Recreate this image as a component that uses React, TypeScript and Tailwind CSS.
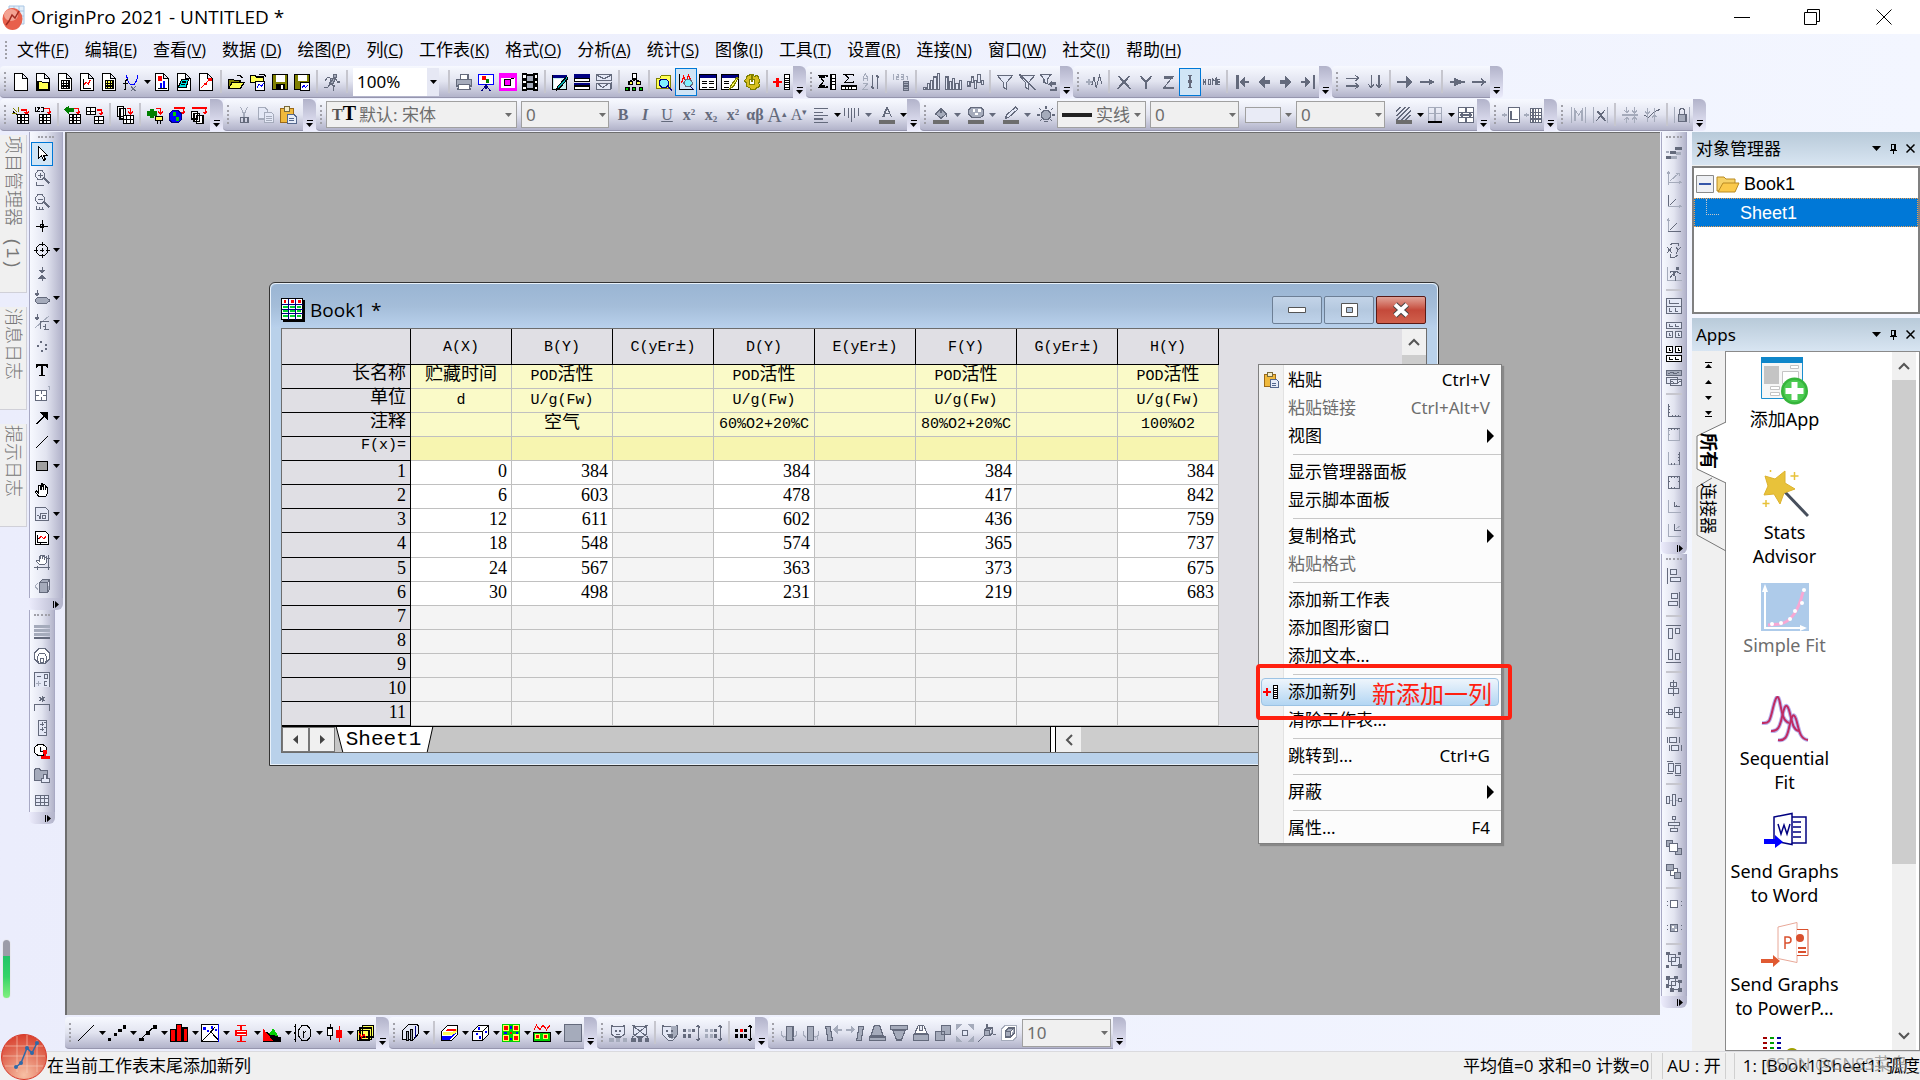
import React from 'react';

type Shape = [stroke: string, fill: string, d: string];

const K = '#000000';
const W = '#ffffff';
const G = '#646a7c';
const L = '#a5abbb';
const R = '#ff0000';
const B = '#0000ff';
const Y = '#ffff54';
const N = '#000080';
const O = '#808000';

const PAGE = 'M2.5 .5h7l4 4v11h-11z M9.5 .5v4h4';
const GRID = 'M4.5 6.5h7v7h-7z M7 6.5v7 M9.5 6.5v7 M4.5 9h7 M4.5 11.5h7';
const LOWGRID = 'M4.5 7.5h10v8h-10z M8 7.5v8 M11 7.5v8 M4.5 10h10 M4.5 12.5h10';
const AXES = 'M2.5 1v13.5h12';

const ICONS: Record<string, Shape[]> = {
  'new': [[K, W, PAGE]],
  'new-folder': [[K, W, PAGE], [K, Y, 'M3.5 7.5h3l1 1h5v6h-9z']],
  'new-book': [[K, W, PAGE], [K, '', GRID]],
  'new-graph': [[K, W, PAGE], [R, '', 'M5 11l2-3 2 2 2-4'], [K, '', 'M4.5 5v8.5h7']],
  'new-matrix': [[K, W, PAGE], [K, Y, GRID]],
  'new-function': [[B, '', 'M4 1.5q1 9 5 9t5-9'], [K, '', 'M5 6h-1l-1 2v7h-1 M1 9.5h4'], [G, '', 'M8 12l4 4 M12 12l-4 4']],
  'new-layout': [[K, W, PAGE], ['', R, 'M4 3h4v4h-4z'], ['', B, 'M6 9h2v4h-2z M9 7h2v6h-2z'], [K, '', 'M4 14h8']],
  'new-notes': [[K, W, PAGE], [K, '#00e0e0', 'M6 5.5h6l-2 7h-7z'], [K, '', 'M6 8h4 M5 10h4']],
  'new-excel': [[K, W, PAGE], [R, '', 'M4 13l8-8'], ['', R, 'M6 9h3v2h-3z M10 4h3v3h-3z']],
  'open': [[K, O, 'M1.5 13.5v-8h4l1 1h5v2h3.5l-3 5z'], [K, Y, 'M1.5 13.5l3-5h11l-4 5z'], [K, '', 'M9 2.5h3l2 2']],
  'open-template': [[K, Y, 'M1.5 8.5v-6h4l1 1h6v5z'], [K, W, 'M5.5 7.5h8v8h-8z'], [B, '', 'M7 13l2-3 2 2 2-3'], [K, '', 'M9 1h4l2 2']],
  'save': [[K, O, 'M1.5 1.5h13v13h-13z'], ['', W, 'M4 2h8v6h-8z'], ['', K, 'M4 10h8v4h-8z'], ['', W, 'M9 11h2v3h-2z']],
  'save-template': [[K, O, 'M1.5 1.5h13v13h-13z'], ['', W, 'M4 2h8v5h-8z'], [K, W, 'M6.5 8.5h8v7h-8z'], [B, '', 'M8 13l2-2 1 2 2-2']],
  'run': [[G, L, 'M9 1h3v3h-3z M7 5h4l-2 4h-3z'], [G, '', 'M9 5l-5-1-2 3 M11 5l2 3h2 M9 5l-3 5 4 1-1 5 M6 10l-2 3h-3']],
  'print': [[G, W, 'M4.5 5v-4h7v4'], [G, L, 'M1.5 5.5h13v6h-13z'], [G, W, 'M3.5 10.5h9l1 4h-11z']],
  'slides': [[B, W, 'M1.5 1.5h13v9h-13z'], ['', R, 'M4 3h4v3h-4z'], ['', '#008000', 'M8 5h3v4h-3z'], [N, '', 'M8 10v4 M8 11l-4 5 M8 11l4 5']],
  'camera': [['', '#ff00ff', 'M0 0h16v16h-16z'], ['', W, 'M2 4h12v9h-12z'], [K, '#ff00ff', 'M5 6h5v5h-5z'], [K, '', 'M11 5h2']],
  'film': [['', K, 'M1 0h4v16h-4z M11 0h4v16h-4z M5 1h6v2h-6z M5 7h6v2h-6z M5 13h6v2h-6z'], ['', W, 'M2 2h2v2h-2z M2 7h2v2h-2z M2 12h2v2h-2z M12 2h2v2h-2z M12 7h2v2h-2z M12 12h2v2h-2z'], ['', L, 'M5 3h6v4h-6z M5 9h6v4h-6z']],
  'script': [[K, '#c8f0f0', 'M1.5 2.5h12v12h-12z'], ['', N, 'M2 2h12v2h-12z'], ['', W, 'M3 5h6v8h-6z'], [K, '#00b0b0', 'M14 3l-8 9-1 3 3-2 7-8z']],
  'results': [['', N, 'M1 1h14v3h-14z M1 9h14v3h-14z'], [K, W, 'M1.5 4.5h13v3h-13z M1.5 11.5h13v3h-13z']],
  'messages': [[G, '#e4e8f6', 'M1.5 1.5h13v5h-13z M1.5 9.5h12v5h-12z'], [G, '', 'M2 2l6 3 6-3 M3 10l4 3 4-3 M14.5 8v6']],
  'explorer': [[K, W, 'M6.5 .5h4v4h-4z'], [K, Y, 'M3.5 7.5h3v3h-3z M10.5 7.5h3v3h-3z'], [K, '#00d000', 'M.5 12.5h3v3h-3z M6.5 12.5h3v3h-3z M12.5 12.5h3v3h-3z'], [K, '', 'M8 5v2 M5 7l3-2 4 2']],
  'preview': [[O, Y, 'M1.5 4.5h3l1-2h8v11h-12z'], [N, '#7ff0ff', 'M5 5.5h5l2 2v3l-2 2h-4l-2-2v-3z'], [N, '', 'M11 11l4 4 M11 12l4 4']],
  'zoom-data': [[K, '', AXES], [R, '', 'M4 9l2-6 2 5 2-6 2 4'], [G, '#7ff0ff', 'M8 6h4l2 3-2 3h-4l-2-3z'], [N, '', 'M12 12l3 3']],
  'dialog-table': [[K, W, 'M.5 1.5h15v13h-15z'], ['', N, 'M1 2h14v2h-14z'], [K, '', 'M3 7.5h4 M9 7.5h4 M3 9.5h4 M9 9.5h4 M3 12.5h4 M9 12.5h4']],
  'dialog-edit': [[K, W, 'M.5 1.5h15v13h-15z'], ['', N, 'M1 2h14v2h-14z'], [K, '', 'M3 7.5h4 M3 9.5h4 M3 12.5h4'], [O, Y, 'M14 4l-5 7-1 3 3-2 4-7z']],
  'gear': [[O, '#d8c020', 'M6 1h3l1 2 3-1 1 3 1 2-1 2 1 3-3 1-1 2h-4l-1-2-3-1v-3l-2-2 2-2v-2l3-1z'], [O, W, 'M6 6h4v4h-4z'], [O, '', 'M8 2v6']],
  'add-column': [['', R, 'M0 7h8v2h-8z M3 4h2v8h-2z'], [K, W, 'M10.5 1.5h4v13h-4z'], [K, '', 'M10 4.5h5 M10 6.5h5 M10 8.5h5 M10 10.5h5 M10 12.5h5']],
  'stats-column': [[K, '', 'M8 3.5v-1h-7l4 5-4 5h7v-1 M1 3.5h5 M1 11.5h5'], [K, W, 'M11.5 1.5h4v13h-4z'], [K, '', 'M11 4.5h5 M11 7.5h5 M11 10.5h5']],
  'stats-row': [[K, '', 'M12 2.5v-1h-8l4 3-4 4h8v-1'], [K, W, 'M1.5 11.5h13v3h-13z'], [K, '', 'M4.5 11v4 M7.5 11v4 M10.5 11v4']],
  'sort': [[L, '', 'M1.5 7v-4l1.5-2 1.5 2v4 M1.5 5h3 M1 9.5h4l-4 5h4'], [G, '', 'M9.5 2v12 M8 12l1.5 2 1.5-2 M13.5 2v12 M12 4l1.5-2 1.5 2']],
  'set-values': [[L, '', 'M1.5 1v5 M4 1.5h2v2h-2v2h2 M8 1.5h2v4h-2 M8 3.5h2 M12 3h2v3'], [G, L, 'M10.5 7.5h4v8h-4z'], [G, '', 'M10 9.5h5 M10 11.5h5 M10 13.5h5']],
  'bars-up': [[G, '#e4e8f6', 'M1.5 12.5h2v2h-2z M4.5 9.5h2v5h-2z M7.5 6.5h2v8h-2z M10.5 3.5h2v11h-2z M13.5 .5h2v14h-2z']],
  'bars': [[G, '#e4e8f6', 'M1.5 3.5h2v11h-2z M4.5 7.5h2v7h-2z M7.5 4.5h2v10h-2z M10.5 9.5h2v5h-2z M13.5 6.5h2v8h-2z']],
  'bars-mid': [[G, '#e4e8f6', 'M1.5 7.5h2v4h-2z M4.5 3.5h2v5h-2z M7.5 6.5h2v7h-2z M10.5 1.5h2v7h-2z M13.5 6.5h2v4h-2z']],
  'filter': [[G, '#e4e8f6', 'M1.5 2.5h13l-5 6v6l-3-2v-4z']],
  'filter-off': [[G, '#e4e8f6', 'M1.5 2.5h13l-5 6v6l-3-2v-4z'], [G, '', 'M1 1l14 14 M2 1l14 14']],
  'filter-again': [[G, '#e4e8f6', 'M.5 1.5h9l-3 4v4l-3-1v-3z'], ['', G, 'M7 10l4-4v2h3v3h-3v2z M15 12v4h-6v-2h4v-2z']],
  'add-peak': [[L, '', 'M1 8h5 M3.5 5.5v5'], [G, '', 'M6 11l2-7 2 9 3-11 2 8']],
  'x': [[G, '', 'M3 3l10 11 M4 3l10 11 M13 3l-10 11 M12 3l-10 11']],
  'y': [[G, '', 'M3 3l5 6v5 M13 3l-5 6 M4 3l4.5 5v6 M12 3l-4 5']],
  'z': [[G, '', 'M4 3.5h8l-8 10h9 M4 4.5h8 M4 12.5h9']],
  'marker': [[G, '', 'M6 2.5h4 M8 2v11 M6 12.5h4'], ['', G, 'M6.5 6h3v3h-3z']],
  'home': [[G, '', 'M.5 5v6 M2.5 5v6 M.5 8h2 M4.5 5.5h2v5h-2z M8.5 11v-6l1.5 2 1.5-2v6 M15 5.5h-2v5h2 M13 8h2']],
  'first': [['', G, 'M3 2h2v12h-2z M6 8l5-5v4h3v2h-3v4z']],
  'prev': [['', G, 'M3 8l6-6v4h4v4h-4v4z']],
  'next': [['', G, 'M13 8l-6-6v4h-4v4h4v4z']],
  'last': [['', G, 'M12 2h2v12h-2z M10 8l-5-5v4h-3v2h3v4z']],
  'two-right': [[G, '', 'M2 4.5h11 M10 2l3 2.5-3 2.5 M2 11.5h11 M10 9l3 2.5-3 2.5']],
  'two-down': [[G, '', 'M4.5 2v11 M2 10l2.5 3 2.5-3 M11.5 2v11 M9 10l2.5 3 2.5-3']],
  'arrow-big': [[G, G, 'M1 8h8v-5l5 5-5 5v-5']],
  'arrow-small': [[G, G, 'M2 8h8v-2l4 2-4 2v-2']],
  'arrow-solid': [[G, G, 'M2 8h4v-3l7 3-7 3v-3 M13 8h2']],
  'arrow-thin': [[G, '', 'M2 8h12 M10 5l3 3-3 3']],

  'wizard': [[K, Y, 'M1 5l8 6'], [O, '', 'M1 2l3 3 M6 1v4 M0 7h4'], [R, '', 'M8 3.5h5v4 M11 5l2 2.5 2-2.5'], [K, W, LOWGRID]],
  'import-ascii': [[K, '', 'M1.5 1v4 M3 1.5h2l-2 3h2 M6.5 1.5h2v3h-2'], [R, '', 'M9 2.5h4.5v4 M12 5l1.5 2 1.5-2'], [K, W, LOWGRID]],
  'reimport': [['#008000', '#008000', 'M1 3l3-2.5v2h4v2h-4v2z'], [R, '', 'M12.5 2v5 M11 5l1.5 2 1.5-2 M9 2.5h3'], [K, W, LOWGRID]],
  'import-sheet': [[K, W, 'M.5 1.5h8v6h-8z M4 1.5v6 M.5 4.5h8'], [R, '', 'M10 3.5h3.5v4 M12 6l1.5 2 1.5-2'], [K, W, 'M7.5 9.5h8v6h-8z M11 9.5v6 M7.5 12.5h8']],
  'import-multi': [[K, W, 'M1.5 .5h5v9h-5z M3.5 2.5h5v9h-5z'], [R, '', 'M10 2.5h3v4 M11 5l2 2 2-2'], [K, W, 'M6.5 8.5h9v7h-9z M9.5 8.5v7 M12.5 8.5v7 M6.5 12h9']],
  'connect-file': [['#008000', '#008000', 'M1 5h8v3h-8z M4 3h3v7h-3z'], [R, '', 'M9 2.5h4v4 M11 5l2 2 2-2'], [K, Y, 'M8.5 9.5h6v3h-6z M10 13v3 M13 13v3']],
  'connect-web': [[N, B, 'M4 4h5l3 3v5l-3 3h-5l-3-3v-5z'], ['', '#00d000', 'M4 5h3v4h-3z M7 10h3v3h-3z'], ['', R, 'M5 1h10v2h-10z'], [R, '', 'M13.5 2v5 M12 5l1.5 2 1.5-2']],
  'connect-db': [[K, W, 'M1.5 4.5h5v7h-5z M3.5 6.5h5v7h-5z M5.5 8.5h6v7h-6z'], ['', R, 'M2 1h13v2h-13z'], [R, '', 'M13.5 2v5 M12 5l1.5 2 1.5-2']],
  'cut': [[L, '', 'M5 1l4 9 M11 1l-4 9'], [G, '', 'M4.5 10.5h3v4h-3z M8.5 10.5h3v4h-3z']],
  'copy': [[L, '#e4e8f6', 'M1.5 1.5h6l2 2v8h-8z'], [L, '#e4e8f6', 'M6.5 5.5h6l2 2v7h-8z'], [L, '', 'M8 9h5 M8 11h5 M8 13h5']],
  'paste': [['#9c6a18', '#f0b93c', 'M1.5 2.5h11v12h-11z'], ['#77693c', '#f4ecc8', 'M4.5 .5h5v4h-5z'], ['#54678c', '#e6ecf8', 'M7.5 7.5h6l2 2v6h-8z'], ['#54678c', '', 'M9 11h4 M9 13h4']],
  'align-left': [[G, '', 'M2 2.5h12 M2 5.5h8 M2 8.5h12 M2 11.5h8 M2 14.5h12']],
  'columns': [[G, '', 'M1.5 2v7 M4.5 2v9 M7.5 2v12 M10.5 2v9 M13.5 2v7']],
  'font-color': [[G, '', 'M4 10l4-9 4 9 M5.5 7h5 M5 10l3.5-9'], ['', '#6d6d6d', 'M1 12h14v4h-14z']],
  'fill-color': [[G, L, 'M3 7l5-5 5 5-5 4z'], [G, '', 'M8 2v4 M13 7v3'], ['', '#6d6d6d', 'M1 12h14v4h-14z']],
  'pattern-color': [[G, L, 'M4 1h8l3 3v4l-3 2h-8l-3-3v-3z'], ['', W, 'M5 3h2v2h-2z M10 3h2v2h-2z M7 6h3v2h-3z'], ['', '#6d6d6d', 'M1 12h14v4h-14z']],
  'line-color': [[G, '#e4e8f6', 'M12 1l2 2-8 7-3 1 1-3z'], ['', '#6d6d6d', 'M1 12h14v4h-14z']],
  'light': [[G, L, 'M6 4h4l2 2v4l-2 2h-4l-2-2v-4z'], [G, '', 'M8 0v3 M2 2l2 2 M14 2l-2 2 M0 8h3 M13 8h3 M3 13l2-2 M13 13l-2-2 M6.5 14h3']],
  'hatch': [[G, '', 'M1 5l4-4 M1 9l8-8 M1 13l12-12 M5 13l9-9 M9 13l5-5'], ['', '#6d6d6d', 'M1 12h14v4h-14z']],
  'borders': [[L, '', 'M2.5 1v12 M8 1v12 M13.5 1v12 M2 1.5h12 M2 7h12'], ['', K, 'M2 13h12v2h-12z']],
  'merge': [[G, W, 'M1.5 1.5h13v13h-13z'], [G, '', 'M1 5.5h14 M1 10.5h14 M8 1v4 M8 11v4 M3 8h10 M5 6l-2 2 2 2 M11 6l2 2-2 2']],
  'add-layer': [[L, '', 'M0 8h4 M2 6v4'], [G, W, 'M5.5 1.5h10v13h-10z'], [G, '', 'M8 4v8h6']],
  'add-table': [[L, '', 'M0 8h4 M2 6v4'], [G, W, 'M5.5 2.5h10v12h-10z M8 2v12 M10.5 2v12 M13 2v12 M5 5.5h10 M5 8.5h10 M5 11.5h10']],
  'mask': [[L, '', 'M2.5 1v14 M14.5 1v14 M5 13v-10l3.5 5 3.5-5v10 M6 13v-9 M11 13v-9']],
  'unmask': [[L, '', 'M2.5 1v14 M14.5 1v14'], [G, '', 'M5 4l7 9 M6 4l7 9 M12 4l-7 9']],
  'spread': [[L, '', 'M5 1v5 M3 4l2 2 2-2 M5 15v-5 M3 12l2-2 2 2 M12 1v5 M10 4l2 2 2-2 M12 15v-5 M10 12l2-2 2 2 M1 8h14']],
  'merge-rows': [[G, '', 'M1 8l4 2 5-5 5-2'], [L, '', 'M4 2v12 M10 2v12 M2 5l2 2 2-2 M8 10l2-2 2 2']],
  'lock': [[L, '', 'M1.5 1v14 M14.5 1v14'], [G, '', 'M5.5 8v-4l1.5-1.5h2l1.5 1.5v4'], [G, L, 'M4.5 7.5h7v6h-7z']],

  'pointer': [[K, W, 'M4.5 .5v12l3-3 2 5 2-1-2-4h4z']],
  'zoom-in': [[G, '', 'M4 .5h4l2.5 3v3l-2.5 3h-4l-2.5-3v-3z M6 2.5v5 M3.5 5h5 M2 12v3h8'], ['', G, 'M9 8l2-1 5 6-2 1z']],
  'zoom-out': [[G, '', 'M4 .5h4l2.5 3v3l-2.5 3h-4l-2.5-3v-3z M3.5 5h5 M2 12v3h8 M5 13v2 M8 13v2'], ['', G, 'M9 8l2-1 5 6-2 1z']],
  'reader': [[K, '', 'M8 2v12 M2 8h12 M6.5 6.5h3v3h-3z']],
  'data-reader': [[K, '', 'M8 0v4 M8 12v4 M0 8h4 M12 8h4 M5.5 2.5h5l3 3v5l-3 3h-5l-3-3v-5z M8 6v4 M6 8h4']],
  'squeeze': [[G, G, 'M8 1v4 M5.5 4h5l-2.5 3z M8 15v-4 M5.5 12h5l-2.5-3z']],
  'mask-tool': [[G, G, 'M3 0v4 M1 3h4l-2 3z'], [G, L, 'M4 7.5h8l3 2v2l-3 2h-8l-3-2v-2z']],
  'draw-tool': [[G, G, 'M3 0v4 M1 3h4l-2 3z'], [L, '', 'M1 14l14-12'], [G, '', 'M6.5 15v-8h8 M9 12h3 M10 15h5 M11 10v5']],
  'dots': [['', G, 'M6 3h2v2h-2z M11 6h2v2h-2z M3 7h2v2h-2z M11 10h2v2h-2z M7 12h2v2h-2z']],
  'text': [['', K, 'M2 2h12v4h-1l-1-2h-3v9h2v1h-6v-1h2v-9h-3l-1 2h-1z']],
  'insert-object': [[G, W, 'M1.5 4.5h11v10h-11z'], [G, '', 'M7 4v4 M7 11v4 M1 9.5h4 M9 9.5h4'], [L, '', 'M13.5 0h2v4']],
  'arrow-tool': [[K, K, 'M7 2.5h6.500v6.500z'], [K, '', 'M2 14l10-10 M3 14l9-9']],
  'line-tool': [[K, '', 'M2 14l12-12']],
  'rect-tool': [[K, '#a0a0a0', 'M2.5 3.5h11v9h-11z']],
  'hand': [[K, W, 'M5 15l-3.5-5 1-1 2 2v-7l1.5-1 1 5v-6l1.5-.5 1 6v-5h1.5l.5 5 1-3 1 1v6l-2 3z']],
  'formula': [[G, '#e4e8f6', 'M1.5 1.5h10l3 3v10h-13z'], [G, '', 'M3 9h1.5l1.5 4 1-6h6 M8.5 9.5h3v3h-3z']],
  'graph-page': [[K, W, 'M1.5 1.5h10l3 3v10h-13z'], [R, '', 'M5 9l2-3 3 3 2-3'], [K, '', 'M3.5 5v7.5h9 M3 8h2 M6 12v2']],
  'pan-axis': [[G, W, 'M5 10l-3-3 1-1 2 1v-5h1.5v3l.5-4h1.5v4l1-4h1v4l1.5-2v6l-2 2z'], [G, '', 'M0 13.5h16 M14.5 1v15 M3 12v4 M13 4h3']],
  'rotate-cube': [[G, L, 'M5.5 4.5h8v10h-8z M5.5 4.5l3-3h7l-2 3 M15.5 1.5v10l-2 3'], [L, '', 'M4 5l-3 3 3 4']],
  'lines4': [['', L, 'M0 1h16v3h-16z M0 5h16v3h-16z M0 9h16v3h-16z'], ['', G, 'M0 13h16v2h-16z']],
  'rings': [[G, W, 'M5 .5h6l4.5 4.5v6l-4.5 4.5h-6l-4.5-4.5v-6z'], [G, '', 'M5.5 5.5h5l2 3v4l-2 3h-5l-2-3v-4z M6.5 10.5h3v4h-3z']],
  'legend': [[G, '#e4e8f6', 'M.5 15v-14.5h15v14.5'], [G, '', 'M3 4.5h4 M10.5 2.5h2.5v4h-2.5z M13 9.5h-2.5v4h2.5'], [L, '', 'M2 11.5h5 M4.5 9v5']],
  'significance': [[G, '', 'M8 0v6 M5 1l6 4 M11 1l-6 4 M.5 15v-6.5h15v6.5']],
  'scale': [[G, '#e4e8f6', 'M4.5 .5h8v15h-8z'], [G, '', 'M6 4h4 M8 2v4 M6 9h4 M8 7v4 M10 2.5h2 M10 7.5h2 M10 12.5h2']],
  'timestamp': [[K, W, 'M4 .5h5l3.5 3v5l-3.5 3h-5l-3.5-3v-5z M6.5 3v4h3'], ['', R, 'M9 6h4v4h-1v2h4v3h-9v-3h3v-2h-1z']],
  'stamp-folder': [[G, L, 'M.5 2.5l1-2h4l1 2h7v10h-13z'], [G, '#e4e8f6', 'M9.5 6.5h3v4h3v4h-8v-4h2z']],
  'table': [[G, '#e4e8f6', 'M1.5 3.5h13v10h-13z'], [G, '', 'M6 3v11 M10 3v11 M1 6.5h14 M1 10h14']],

  'layer-steps': [['', G, 'M9 1h7v3h-7z M4 5h6v3h-6z M0 10h5v3h-5z'], ['', L, 'M10 6h5v3h-5z M5 10h6v3h-6z M0 5h3v2h-3z']],
  'axes3': [[L, '', 'M2.5 15v-13 M1 4l1.5-2.5 1.5 2.5 M2 12.5h13 M13 11l2 1.5-2 1.5 M4 11l9-8 M10 3h3v3']],
  'axes-down': [[G, '', 'M2.5 1v12'], [G, '', 'M4 11l6-6'], [L, '', 'M2 12.5h13 M13 11l2 1.5-2 1.5']],
  'axes-up': [[L, '', 'M2.5 14v-13 M1 3l1.5-2 1.5 2'], [G, '', 'M2 13.5h13 M4 12l7-7']],
  'swap-xy': [[G, '', 'M1 5l5 6 M6 5l-5 6 M10 5l2 3 3-3 M12 8l-2 4 M4 3l3-2h5v3 M12 13l-3 2h-5v-3']],
  'run-axes': [[L, '', 'M1.5 1v13.5h14'], [G, G, 'M10 1h2v2h-2z M7 5h3l-2 4h-1z'], [G, '', 'M9 5l-4 0-1 2 M10 5l3 2h2 M8 9l2 2-1 4 M7 8l-3 4']],
  'layout-1-2': [[G, '#e4e8f6', 'M.5 .5h15v15h-15z'], [G, '', 'M3 2v3.5h10 M.5 8h15 M3 10v3.5h3 M9 10v3.5h3']],
  'layout-2-2': [[G, '#e4e8f6', 'M.5 .5h15v6h-15z M.5 9.5h6v6h-6z M9.5 9.5h6v6h-6z'], [G, '', 'M3.5 2v2.5h3 M9.5 2v2.5h3 M3 11v2h2 M12 11v2h2']],
  'layout-dark': [[K, W, 'M.5 .5h6v6h-6z M9.5 .5h6v6h-6z M.5 9.5h15v6h-15z'], [K, '', 'M3 2v2.5h2 M12 2v2.5h2 M3.5 11v2.5h3 M9.5 11v2.5h3']],
  'layout-stack': [[G, L, 'M.5 .5h15v5h-15z'], [G, '#e4e8f6', 'M.5 7.5h11v6h-11z M4.5 9.5h11v6h-11z'], [G, '', 'M2 4l4-2 3 2 4-2 M5 11l5 3 5-3']],
  'frame-l': [[G, '', 'M2.5 2v12.5h12 M2 4.5h2 M2 7.5h2 M2 10.5h2 M6.5 13v2 M9.5 13v2 M12.5 13v2']],
  'frame-top': [[L, '', 'M2.5 2v12.5h11v-12 M2 4.5h2 M2 8h2'], [G, '', 'M2 2.5h12 M5.5 2v2 M8.5 2v2 M11.5 2v2']],
  'frame-right': [[L, '', 'M13.5 14.5h-11v-13'], [G, '', 'M13.5 2v12.5 M12 4.5h2 M12 7.5h2 M12 10.5h2 M5.5 13v2 M8.5 13v2']],
  'frame-full': [[G, '', 'M2.5 2.5h11v12h-11z M5.5 2v2 M8.5 2v2 M11.5 2v2 M2 7.5h2 M12 7.5h2 M5.5 13v2 M8.5 13v2']],
  'frame-in': [[L, '', 'M2.5 2v12.5h12'], [G, '', 'M8.5 4v4.5h5 M10.5 7v2']],
  'frame-in2': [[L, '', 'M2.5 2v12.5h12 M10 7l4-3'], [G, '', 'M8.5 2v6.5h6']],
  'al-left': [[G, '', 'M1.5 0v16'], [G, '#e4e8f6', 'M4.5 1.5h6v5h-6z M4.5 9.5h10v4h-10z']],
  'al-right': [[G, '', 'M13.5 0v16'], [G, '#e4e8f6', 'M5.5 1.5h6v5h-6z M2.5 9.5h9v4h-9z']],
  'al-top': [[G, '', 'M0 1.5h15'], [G, '#e4e8f6', 'M2.5 4.5h4v10h-4z M9.5 4.5h4v5h-4z']],
  'al-bottom': [[G, '', 'M0 14.5h15'], [G, '#e4e8f6', 'M2.5 1.5h4v10h-4z M9.5 5.5h4v6h-4z']],
  'al-vert': [[G, '#e4e8f6', 'M4.5 2.5h6v4h-6z M2.5 8.5h10v5h-10z'], [G, '', 'M7.5 0v16']],
  'al-horz': [[G, '#e4e8f6', 'M2.5 5.5h4v5h-4z M8.5 3.5h5v10h-5z'], [G, '', 'M0 8h16']],
  'same-w': [[G, '#e4e8f6', 'M3.5 1.5h7v5h-7z M5.5 9.5h7v5h-7z'], [G, '', 'M1 1v6 M13 1v6 M3 9v6 M15 9v6']],
  'same-h': [[G, '#e4e8f6', 'M2.5 3.5h5v8h-5z M9.5 5.5h5v8h-5z'], [G, '', 'M1 1h6 M1 13.5h6 M9 3h6 M9 15.5h6']],
  'dist-h': [[L, '', 'M0 8h16'], [G, '#e4e8f6', 'M.5 4.5h3v7h-3z M6.5 2.5h3v11h-3z M12.5 6.5h3v3h-3z']],
  'dist-v': [[L, '', 'M8 0v16'], [G, '#e4e8f6', 'M6.5 .5h3v3h-3z M2.5 6.5h11v3h-11z M4.5 12.5h7v3h-7z']],
  'front': [[G, L, 'M.5 .5h6v6h-6z M9.5 8.5h6v6h-6z'], [G, W, 'M3.5 3.5h8v8h-8z']],
  'back': [[G, W, 'M4.5 4.5h7v7h-7z'], [G, L, 'M.5 .5h7v6h-7z M8.5 8.5h6v6h-6z']],
  'box': [[G, W, 'M4.5 4.5h7v7h-7z'], [G, '', 'M1 5v1 M1 9v1 M15 5v1 M15 9v1']],
  'box-dots': [[G, L, 'M4.5 4.5h7v7h-7z'], [G, '', 'M1 5v1 M1 9v1 M15 5v1 M15 9v1'], ['', W, 'M6 6h2v2h-2z M9 9h2v2h-2z']],
  'group': [[G, '#e4e8f6', 'M2.5 2.5h7v7h-7z M5.5 5.5h8v8h-8z'], ['', G, 'M0 0h4v3h-4z M12 0h3v3h-3z M0 13h3v3h-3z M12 12h4v4h-4z']],
  'ungroup': [[G, '#e4e8f6', 'M2.5 2.5h7v7h-7z M5.5 5.5h8v8h-8z'], ['', G, 'M0 0h4v4h-4z M8 0h4v3h-4z M0 8h3v4h-3z M4 12h4v4h-4z M12 4h4v3h-4z M12 12h4v4h-4z']],

  'plot-line': [[K, '', 'M1 15l14-14']],
  'plot-scatter': [['', K, 'M0 12h3v3h-3z M5 8h3v3h-3z M9 4h3v3h-3z M13 1h3v3h-3z']],
  'plot-line-symbol': [[K, '', 'M2 13l12-11'], ['', K, 'M0 12h4v3h-4z M6 6h4v4h-4z M12 1h4v3h-4z']],
  'plot-column': [[K, R, 'M.5 4.5h4v11h-4z M5.5 .5h5v15h-5z M11.5 3.5h4v12h-4z']],
  'plot-multi': [[K, W, 'M.5 .5h15v15h-15z'], [K, '', 'M1 15l8-8 6 7 M8 8l4-5'], ['', B, 'M2 3h2v2h-2z M5 5h2v2h-2z M9 2h2v2h-2z M12 4h2v2h-2z'], [B, '', 'M15.5 0v16']],
  'plot-box': [[R, W, 'M3.5 5.5h9v5h-9z'], [R, '', 'M8 1v4 M8 11v5 M4 1.5h8 M4 15.5h8 M3 8h10']],
  'plot-area': [['', K, 'M0 6l16 6v4h-16z'], ['', R, 'M0 4l9 11h-9z'], ['', '#00d000', 'M5 9l4-5 5 7z']],
  'plot-polar': [[K, '', 'M1.5 0v16 M0 2.5h2 M0 8h2 M0 13.5h2 M7 1.5h5l3 4v5l-3 4h-5l-3-4v-5z M8.5 12v-6 M8 7.5h1l2-1']],
  'plot-stock': [[K, W, 'M2.5 3.5h4v7h-4z M4.5 0v3 M4.5 11v3'], [R, R, 'M10.5 5.5h4v6h-4z M12.5 2v3 M12.5 12v4']],
  'plot-template': [[K, Y, 'M5.5 1.5h10v10h-10z M3.5 3.5h10v10h-10z M1.5 5.5h10v9h-10z'], [R, '', 'M3 8l2 4 2-3 2 3']],
  'plot-3d-bars': [[K, '#e4e8f6', 'M1.5 13.5v-8l5-5h8l1 1v7l-5 6z'], [K, L, 'M4.5 6.5h2v8h-2z M8.5 4.5h2v10h-2z'], [N, '', 'M12.5 2v10']],
  'plot-surface': [[K, W, 'M1.5 14.5v-8l5-5h9v8l-5 5z'], ['', B, 'M2 11l8 0 4-4v2l-5 5h-7z'], ['', Y, 'M3 7l8 0 4-3v3l-4 3h-8z'], ['', R, 'M7 4h7v2h-9z']],
  'plot-3d-scatter': [[K, W, 'M1.5 14.5v-8l5-5h9v8l-5 5z M1.5 6.5h9v8 M10.5 6.5l5-5'], ['', B, 'M4 8h2v2h-2z M7 11h2v2h-2z M6 3h2v2h-2z M12 6h2v2h-2z']],
  'plot-contour': [['', '#00d000', 'M0 0h16v16h-16z'], ['', Y, 'M1 1h5v5h-5z M10 9h5v6h-5z M1 10h5v5h-5z M10 1h5v5h-5z'], ['', R, 'M2 2h3v3h-3z M11 11h3v3h-3z M7 7h2v2h-2z M11 2h3v3h-3z M2 11h3v3h-3z'], ['', B, 'M7 2h2v2h-2z M7 12h2v2h-2z M2 7h2v2h-2z M12 7h2v2h-2z']],
  'plot-waterfall': [[R, '', 'M1 5l2-4 3 4 3-4 3 4 3-4'], [K, '#00d000', 'M.5 7.5h15v8h-15z'], ['', Y, 'M2 9h4v4h-4z M9 9h4v4h-4z'], ['', R, 'M3 10h2v2h-2z M10 10h2v2h-2z']],
  'plot-image': [[G, L, 'M.5 .5h15v15h-15z']],
  'mask-face': [[G, '#e4e8f6', 'M2.5 1.5l3 1h5l3-1v8l-3 2h-5l-3-2z'], ['', G, 'M5 5h2v2h-2z M9 5h2v2h-2z M6 9h4v1h-4z'], ['', L, 'M0 12h4v4h-4z M6 12h4v4h-4z M12 12h4v4h-4z']],
  'mask-face-x': [[G, '#e4e8f6', 'M2.5 1.5l3 1h5l3-1v8l-3 2h-5l-3-2z'], [G, '', 'M1 1l14 11 M15 1l-14 11'], ['', G, 'M0 12h4v4h-4z M6 12h4v4h-4z M12 12h4v4h-4z']],
  'mask-color': [[G, '#e4e8f6', 'M1.5 1.5l3 1h7l3-1v8l-4 5h-4l-5-5z'], ['', L, 'M9 2h5v8l-5 4z'], ['', G, 'M4 5h2v2h-2z M9 5h2v2h-2z M5 9h6v3h-4z']],
  'mask-range': [['', G, 'M0 4h3v3h-3z M0 9h3v3h-3z M4 9h3v3h-3z M8 4h3v3h-3z'], ['', L, 'M4 4h3v3h-3z'], [G, '', 'M13.5 1v14 M12 3l1.5-2 1.5 2 M12 13l1.5 2 1.5-2']],
  'mask-range2': [['', L, 'M0 4h3v3h-3z M4 4h3v3h-3z M0 9h3v3h-3z M4 9h3v3h-3z'], ['', G, 'M8 9h3v3h-3z M8 4h3v3h-3z'], [G, '', 'M13.5 1v14 M12 3l1.5-2 1.5 2 M12 13l1.5 2 1.5-2']],
  'mask-toggle': [['', K, 'M0 4h3v3h-3z M8 4h3v3h-3z M0 9h3v3h-3z M4 9h3v3h-3z M8 9h3v3h-3z'], ['', R, 'M4 4h3v3h-3z'], [K, '', 'M13.5 1v14 M12 3l1.5-2 1.5 2 M12 13l1.5 2 1.5-2']],
  'rot-left': [[G, L, 'M5.5 2.5h6v12h-6z'], [L, '', 'M1 6v4l3 2 M15 6v4l-3 2 M2 11h3v3']],
  'rot-right': [[G, L, 'M4.5 2.5h6v12h-6z'], [L, '', 'M1 6v4l3 2 M15 6v4l-3 2 M11 11h3v3']],
  'tilt-left': [[G, L, 'M1.5 2.5h4l2 12h-4z'], ['', L, 'M8 5l4-4v3h4v2h-4v3z']],
  'tilt-right': [[G, L, 'M9.5 14.5h4l2-12h-4z'], ['', L, 'M8 5l-4-4v3h-4v2h4v3z']],
  'persp-up': [[G, L, 'M5.5 1.5h5l3 9h-11z M1.5 11.5h14v3h-14z']],
  'persp-down': [[G, L, 'M.5 1.5h15v3h-15z M2.5 5.5h11l-3 8h-5z M6 14h4v1h-4z']],
  'persp': [[G, W, 'M5.5 1.5h5l3 7h-11z M6.5 1.5v4h3v-4'], [G, L, 'M1.5 9.5h13v5h-13z']],
  'resize': [[G, L, 'M6.5 1.5h8v8h-8z M1.5 6.5h8v8h-8z']],
  'expand': [['', L, 'M0 0h6l-6 6z M16 0v6l-6-6z M0 16v-6l6 6z M16 16h-6l6-6z'], [G, '#e4e8f6', 'M5.5 5.5h5v5h-5z']],
  'axes-cube': [[G, L, 'M5.5 5.5h5v5h-5z M5.5 5.5l2-2h5l-2 2 M12.5 3.5v5l-2 2'], [G, '', 'M8 0v3 M13 9h3 M5 11l-5 5']],
  'cube': [[L, W, 'M1.5 14.5v-10l3-3h10v10l-3 3z'], [G, L, 'M4.5 6.5h5v5h-5z M4.5 6.5l3-3h5l-3 3 M12.5 3.5v5l-3 3']],
};

function Icon({ name, size = 18 }: { name: string; size?: number }) {
  return (
    <svg width={size} height={size} viewBox="0 0 16 16" shapeRendering="crispEdges" aria-hidden="true" className="shrink-0">
      {(ICONS[name] || []).map(([stroke, fill, d], i) => (
        <path key={i} d={d} stroke={stroke || 'none'} fill={fill || 'none'} />
      ))}
    </svg>
  );
}

function Caret({ color = '#000' }: { color?: string }) {
  return (
    <svg width="7" height="4" viewBox="0 0 7 4" aria-hidden="true" className="shrink-0">
      <path d="M0 0h7L3.5 4z" fill={color} />
    </svg>
  );
}

// Glyph buttons of the format bar
const GLYPHS: Record<string, React.ReactNode> = {
  bold: <b>B</b>,
  italic: <b className="italic">I</b>,
  underline: <span className="underline">U</span>,
  superscript: <b>x<sup className="text-[9px]">2</sup></b>,
  subscript: <b>x<sub className="text-[9px]">2</sub></b>,
  supersub: <b>x<sup className="text-[9px]">2</sup></b>,
  greek: <b>αβ</b>,
  'font-up': <span className="text-xl leading-none">A<sup className="text-[9px]">▴</sup></span>,
  'font-down': <span>A<sup className="text-[9px]">▾</sup></span>,
};

// "*" marks a pressed button, "+" one with a menu, "~" one with a disabled menu, "|" is a divider
function Tools({ items, vertical = false }: { items: string; vertical?: boolean }) {
  return (
    <>
      {items.split(' ').map((item, i) => {
        if (item === '|') {
          return vertical
            ? <div key={i} className="mx-1 my-[3px] h-[2px] self-stretch bg-[#c6c6ce]" />
            : <div key={i} className="mx-[3px] h-[23px] w-[2px] bg-[#c6c6ce]" />;
        }
        const name = item.replace(/[*+~]/g, '');
        const pressed = item.includes('*');
        const menu = item.includes('+') || item.includes('~');
        let box = vertical ? 'h-6 self-stretch px-px' : menu ? 'h-7 w-[31px]' : 'h-7 w-[22px]';
        if (item.includes('~')) box = 'h-7 w-[35px]';
        return (
          <button key={i} type="button" aria-label={name} aria-pressed={pressed} className={`flex shrink-0 items-center ${box}`}>
            <span className={`flex w-[22px] shrink-0 items-center justify-center ${vertical ? 'h-6' : 'h-7'} ${pressed ? 'border border-[#0078d7] bg-[#d0e5f6]' : ''}`}>
              {GLYPHS[name] ? (
                <span className="font-['Liberation_Serif',serif] text-base leading-none whitespace-nowrap text-[#646a7c]">{GLYPHS[name]}</span>
              ) : (
                <Icon name={name} size={vertical ? 16 : 18} />
              )}
            </span>
            {menu && <span className={vertical ? '' : 'ml-[2px]'}><Caret color={item.includes('~') ? '#646a7c' : '#000'} /></span>}
          </button>
        );
      })}
    </>
  );
}

function Bar({ children }: { children: React.ReactNode }) {
  return (
    <div className="flex h-8 shrink-0">
      <div className="flex items-center rounded-l-sm border-b border-[#9696ae] bg-linear-to-b from-[#f7f9ff] via-[#e2e4f0] to-[#b2b3ca]">
        <div className="mr-1 ml-1 h-[19px] border-l-2 border-dotted border-[#a0a0a8]" />
        {children}
      </div>
      <div className="flex w-[13px] flex-col items-center justify-end gap-[2px] rounded-tr-md rounded-br-sm bg-linear-to-b from-[#b2b3ca] to-[#ececfc] pb-1">
        <div className="h-px w-[6px] bg-black" />
        <Caret />
      </div>
    </div>
  );
}

function SideBar({ children, wide = false }: { children: React.ReactNode; wide?: boolean }) {
  return (
    <div className={wide ? 'w-[34px]' : 'w-[26px]'}>
      <div className="flex flex-col items-center border-x border-[#a8a9c4] bg-linear-to-r from-[#f7f9ff] via-[#e2e4f0] to-[#b2b3ca]">
        <div className="my-1 w-4 border-t-2 border-dotted border-[#a0a0a8]" />
        {children}
      </div>
      <div className="flex h-3 items-center justify-end rounded-b-md bg-linear-to-r from-[#ececfc] to-[#b2b3ca] pr-1">
        <svg width="6" height="7" viewBox="0 0 6 7" aria-hidden="true"><path d="M0 0h1v7h-1z M2 0l4 3.5-4 3.5z" /></svg>
      </div>
    </div>
  );
}

function Combo({ label, value, box, plain = false }: { label: string; value: string; box: string; plain?: boolean }) {
  return (
    <div className={`relative flex shrink-0 items-center ${box} ${plain ? 'bg-white' : 'border border-[#a0a0a0] bg-[#f0f0f0]'}`}>
      <select aria-label={label} className={`h-full w-full appearance-none bg-transparent pl-1 text-[17px] ${plain ? 'text-black' : 'text-[#6d6d6d]'}`}>
        <option>{value}</option>
      </select>
      <span className={`pointer-events-none absolute right-0 flex h-full w-3 items-center justify-center ${plain ? 'bg-[#e6e8f4]' : ''}`}>
        <Caret color={plain ? '#000' : '#6d6d6d'} />
      </span>
    </div>
  );
}

const MENUS = ['文件(F)', '编辑(E)', '查看(V)', '数据 (D)', '绘图(P)', '列(C)', '工作表(K)', '格式(O)', '分析(A)', '统计(S)', '图像(I)', '工具(T)', '设置(R)', '连接(N)', '窗口(W)', '社交(I)', '帮助(H)'];

function TopArea() {
  return (
    <header>
      <div className="flex h-[34px] items-center bg-white pl-[2px]">
        <svg width="23" height="28" viewBox="0 0 23 28" aria-hidden="true">
          <path d="M7 3h15v18h-15z M12 3v18 M17 3v18 M7 8h15 M7 13h15" fill="#e3eef8" stroke="#a9c6e4" />
          <ellipse cx="10.5" cy="16" rx="10" ry="11" fill="#e8604c" />
          <ellipse cx="9" cy="12" rx="7" ry="6" fill="#f3a292" />
          <path d="M4 22l3-4 3-6 3 3 4-7" fill="none" stroke="#a02a20" strokeWidth="1.5" />
        </svg>
        <h1 className="ml-[6px] flex-1 font-['Open_Sans',sans-serif] text-[19px] whitespace-nowrap">OriginPro 2021 - UNTITLED *</h1>
        <button type="button" aria-label="最小化" className="flex h-full w-[70px] items-center justify-center"><svg width="16" height="16"><path d="M0 8.5h16" stroke="#000" /></svg></button>
        <button type="button" aria-label="还原" className="flex h-full w-[70px] items-center justify-center"><svg width="16" height="16"><path d="M.5 3.5h12v12h-12z M3.5 3v-2.5h12v12h-3" fill="none" stroke="#000" /></svg></button>
        <button type="button" aria-label="关闭" className="flex h-full w-[73px] items-center justify-center"><svg width="16" height="16"><path d="M.5 .5l15 15 M15.5 .5l-15 15" stroke="#000" /></svg></button>
      </div>
      <nav className="flex h-8 items-center pl-[5px]">
        <div className="h-[18px] border-l-2 border-dotted border-[#a0a0a8]" />
        <div className="ml-[2px] flex">
          {MENUS.map((menu) => {
            const [head, key] = menu.split('(');
            return (
              <button key={menu} type="button" className="px-2 text-[17px] whitespace-nowrap">
                {head}<span className="font-['Open_Sans',sans-serif] text-base leading-none">(<u>{key[0]}</u>)</span>
              </button>
            );
          })}
        </div>
      </nav>
      <div className="mb-px flex h-8">
        <Bar>
          <Tools items="new new-folder new-book new-graph new-matrix new-function+ new-layout new-notes new-excel | open open-template save save-template | run |" />
          <Combo label="缩放" value="100%" box="mr-[6px] ml-[2px] h-7 w-[86px]" plain />
          <Tools items="| print slides camera film | script results messages | explorer | preview *zoom-data dialog-table dialog-edit gear | add-column" />
        </Bar>
        <Bar><Tools items="stats-column stats-row sort | set-values | bars-up bars bars-mid | filter filter-off filter-again" /></Bar>
        <Bar><Tools items="add-peak | x y z *marker home | first prev next last" /></Bar>
        <Bar><Tools items="two-right two-down | arrow-big arrow-small | arrow-solid arrow-thin" /></Bar>
      </div>
      <div className="mb-px flex h-8">
        <Bar><Tools items="wizard import-ascii | reimport import-sheet | import-multi | connect-file connect-web connect-db" /></Bar>
        <Bar><Tools items="cut copy paste" /><div className="w-1" /></Bar>
        <Bar>
          <div className="relative mr-1 flex h-[27px] w-[191px] items-center border border-[#a0a0a0] bg-[#f0f0f0]">
            <span className="flex w-8 items-baseline pl-[5px] font-['Liberation_Serif',serif] leading-none font-bold" aria-hidden="true">
              <span className="text-base text-[#555]">T</span>
              <span className="text-xl leading-none text-black">T</span>
            </span>
            <select aria-label="字体" className="h-full flex-1 appearance-none bg-transparent text-[17px] text-[#6d6d6d]"><option>默认: 宋体</option></select>
            <span className="pointer-events-none absolute right-1"><Caret color="#6d6d6d" /></span>
          </div>
          <Combo label="字号" value="0" box="mr-[3px] h-[27px] w-[88px]" />
          <Tools items="bold italic underline superscript subscript supersub greek font-up font-down align-left+ columns~ font-color+" />
        </Bar>
        <Bar>
          <Tools items="fill-color~ pattern-color~ line-color~ light" />
          <div className="relative mr-1 flex h-[27px] w-[89px] items-center border border-[#a0a0a0] bg-[#f0f0f0] pl-1">
            <span className="h-1 w-[30px] bg-[#222]" />
            <select aria-label="线型" className="h-full flex-1 appearance-none bg-transparent pl-1 text-[17px] text-[#6d6d6d]"><option>实线</option></select>
            <span className="pointer-events-none absolute right-1"><Caret color="#6d6d6d" /></span>
          </div>
          <Combo label="线宽" value="0" box="mr-[6px] h-[27px] w-[89px]" />
          <button type="button" aria-label="图案颜色" className="mr-1 flex items-center gap-1"><span className="h-4 w-9 border border-[#a0a0a0] bg-[#e9ebf6]" /><Caret color="#6d6d6d" /></button>
          <Combo label="图案宽度" value="0" box="mr-2 h-[27px] w-[89px]" />
          <Tools items="hatch+ borders+ merge" />
        </Bar>
        <Bar><Tools items="add-layer add-table" /></Bar>
        <Bar><Tools items="mask unmask | spread merge-rows | lock" /></Bar>
      </div>
    </header>
  );
}

// Half-width glyphs are set smaller so that two of them take one full-width cell
function Mixed({ text }: { text: string }) {
  return (
    <>
      {text.split(/([\u4e00-\u9fff±]+)/).map((part, i) => (
        <span key={i} className={i % 2 ? 'text-lg leading-none' : ''}>{part}</span>
      ))}
    </>
  );
}

const COLUMNS = ['A(X)', 'B(Y)', 'C(yEr±)', 'D(Y)', 'E(yEr±)', 'F(Y)', 'G(yEr±)', 'H(Y)'];
const LABEL_ROWS: [string, string[]][] = [
  ['长名称', ['贮藏时间', 'POD活性', '', 'POD活性', '', 'POD活性', '', 'POD活性']],
  ['单位', ['d', 'U/g(Fw)', '', 'U/g(Fw)', '', 'U/g(Fw)', '', 'U/g(Fw)']],
  ['注释', ['', '空气', '', '60%O2+20%C', '', '80%O2+20%C', '', '100%O2']],
  ['F(x)=', ['', '', '', '', '', '', '', '']],
];
const DATA = [
  ['0', '384', '', '384', '', '384', '', '384'],
  ['6', '603', '', '478', '', '417', '', '842'],
  ['12', '611', '', '602', '', '436', '', '759'],
  ['18', '548', '', '574', '', '365', '', '737'],
  ['24', '567', '', '363', '', '373', '', '675'],
  ['30', '498', '', '231', '', '219', '', '683'],
];

function Sheet() {
  const rowHead = 'h-6 border-r border-b border-black bg-[#e0dfe4] p-0 pr-1 text-right align-top font-normal';
  return (
    <table className="w-[937px] table-fixed border-separate border-spacing-0 font-['Liberation_Mono','Noto_Sans_CJK_SC',monospace] text-[15px] text-black">
      <thead>
        <tr>
          <th className="h-9 w-[129px] border-r border-b border-black bg-[#e0dfe4]" />
          {COLUMNS.map((c) => (
            <th key={c} scope="col" className="border-r border-b border-black bg-[#e0dfe4] p-0 pt-1 font-normal"><Mixed text={c} /></th>
          ))}
        </tr>
      </thead>
      <tbody>
        {LABEL_ROWS.map(([label, cells]) => (
          <tr key={label}>
            <th scope="row" className={`${rowHead} leading-[18px]`}><Mixed text={label} /></th>
            {cells.map((cell, i) => (
              <td key={i} className={`h-6 overflow-hidden border-r border-b border-[#c0c0c0] p-0 text-center leading-[22px] whitespace-nowrap ${label === 'F(x)=' ? 'bg-[#f7f5b0]' : 'bg-[#fafac8]'}`}><Mixed text={cell} /></td>
            ))}
          </tr>
        ))}
        {Array.from({ length: 11 }, (_, r) => (
          <tr key={r} className="font-['Liberation_Serif',serif] text-lg leading-5">
            <th scope="row" className={rowHead}>{r + 1}</th>
            {COLUMNS.map((c, i) => {
              const value = DATA[r]?.[i];
              return <td key={c} className={`h-6 border-r border-b border-[#c0c0c0] p-0 pr-1 text-right align-top ${value ? 'bg-white' : 'bg-[#f4f4f4]'}`}>{value}</td>;
            })}
          </tr>
        ))}
      </tbody>
    </table>
  );
}

function BookWindow() {
  return (
    <section className="absolute top-[149px] left-[202px] flex w-[1170px] flex-col rounded-t-md border border-[#333] bg-[#b9d1ea] p-px shadow-[inset_0_0_0_1px_#e8f1fa]">
      <div className="flex h-11 items-center rounded-t-md bg-linear-to-b from-[#9ab5d3] via-[#a4bdd9] to-[#b9d1ec] pt-2 pr-[11px] pl-[10px]">
        <svg width="24" height="24" viewBox="0 0 24 24" shapeRendering="crispEdges" aria-hidden="true">
          <path d="M2 2h22v22h-22z" fill="#000" />
          <path d="M.5 .5h21v21h-21z" fill="#fff" stroke="#000" />
          <path d="M2 8h5v2h-5z M9 8h5v2h-5z M16 8h4v2h-4z M2 12h5v2h-5z M9 12h5v2h-5z M16 12h4v2h-4z M2 17h5v2h-5z M9 17h5v2h-5z M16 17h4v2h-4z" fill="#00d030" />
          <path d="M3 2h2v3h-2z M10 2h3v3h-3z M17 2h3v3h-3z" fill="#f00" />
          <path d="M1 6.500h21 M1 11h21 M1 15.500h21 M7.500 1v21 M14.500 1v21" stroke="#000080" />
        </svg>
        <h2 className="ml-[5px] flex-1 font-['Open_Sans',sans-serif] text-[19px]">Book1 *</h2>
        <div className="flex items-center gap-[2px]">
          <button type="button" aria-label="最小化窗口" className="flex h-7 w-[50px] items-center justify-center rounded-xs border border-[#6d7f95] bg-linear-to-b from-[#c3d4e8] via-[#b4c8df] to-[#bfd3ea]"><svg width="18" height="7"><path d="M.5 .5h17v5h-17z" fill="#fff" stroke="#555" /></svg></button>
          <button type="button" aria-label="最大化窗口" className="flex h-7 w-[50px] items-center justify-center rounded-xs border border-[#6d7f95] bg-linear-to-b from-[#c3d4e8] via-[#b4c8df] to-[#bfd3ea]"><svg width="17" height="14"><path d="M.5 .5h16v13h-16z M5.5 4.5h6v5h-6z" fill="#fff" fillRule="evenodd" stroke="#555" /></svg></button>
          <button type="button" aria-label="关闭窗口" className="flex h-7 w-[50px] items-center justify-center rounded-xs border border-[#5a1a16] bg-linear-to-b from-[#e0a298] via-[#c4493a] to-[#d0604c]"><svg width="20" height="16"><path d="M4 2.5l12 11 M16 2.5l-12 11" stroke="#444" strokeWidth="6" /><path d="M4 2.5l12 11 M16 2.5l-12 11" stroke="#fff" strokeWidth="4" /></svg></button>
        </div>
      </div>
      <div className="mx-[10px] mb-[11px] border border-[#6d6d6d] bg-[#e0dfe4]">
        <div className="flex h-[397px] justify-between overflow-hidden">
          <Sheet />
          <div className="flex w-6 flex-col items-center bg-[#f0f0f0]">
            <button type="button" aria-label="向上滚动" className="flex h-[26px] w-full items-center justify-center"><svg width="12" height="8"><path d="M1 7l5-5 5 5" fill="none" stroke="#555" strokeWidth="2" /></svg></button>
            <div className="w-full flex-1 bg-[#cdcdcd]" />
          </div>
        </div>
        <div className="flex h-[26px] border-t border-black bg-[#c6c6c6]">
          <button type="button" aria-label="上一个工作表" className="flex w-[27px] items-center justify-center border border-[#777] bg-[#f0f0f0]"><svg width="5" height="9"><path d="M5 0v9L0 4.5z" fill="#444" /></svg></button>
          <button type="button" aria-label="下一个工作表" className="flex w-[26px] items-center justify-center border border-[#777] bg-[#f0f0f0]"><svg width="5" height="9"><path d="M0 0v9l5-4.5z" fill="#444" /></svg></button>
          <button type="button" className="relative w-[97px] text-center font-['Liberation_Mono',monospace] text-[21px] leading-[26px]">
            <svg width="99" height="25" className="absolute inset-0" aria-hidden="true"><path d="M1 -1l7 27h84l6-27z" fill="#fff" stroke="#000" /></svg>
            <span className="relative">Sheet1</span>
          </button>
          <div className="flex-1 border-r border-black" />
          <div className="w-1 bg-white" />
          <div className="flex w-[371px] border-l border-black bg-[#cdcdcd]">
            <button type="button" aria-label="向左滚动" className="flex w-[25px] items-center justify-center bg-[#f0f0f0]"><svg width="8" height="12"><path d="M7 1L2 6l5 5" fill="none" stroke="#555" strokeWidth="2" /></svg></button>
          </div>
        </div>
      </div>
    </section>
  );
}

type MenuEntry = { text: string; hint?: string; off?: boolean; sub?: boolean; icon?: string; hot?: boolean } | null;

const CONTEXT_MENU: MenuEntry[] = [
  { text: '粘贴', hint: 'Ctrl+V', icon: 'paste' },
  { text: '粘贴链接', hint: 'Ctrl+Alt+V', off: true },
  { text: '视图', sub: true },
  null,
  { text: '显示管理器面板' },
  { text: '显示脚本面板' },
  null,
  { text: '复制格式', sub: true },
  { text: '粘贴格式', off: true },
  null,
  { text: '添加新工作表' },
  { text: '添加图形窗口' },
  { text: '添加文本...' },
  null,
  { text: '添加新列', icon: 'add-column', hot: true },
  { text: '清除工作表...' },
  null,
  { text: '跳转到...', hint: 'Ctrl+G' },
  null,
  { text: '屏蔽', sub: true },
  null,
  { text: '属性...', hint: 'F4' },
];

function ContextMenu() {
  return (
    <div className="absolute top-[231px] left-[1191px] z-10 w-[244px]">
      <div role="menu" className="border border-[#808080] bg-[linear-gradient(to_right,#f1f1f1_24px,#e2e2e2_24px,#e2e2e2_25px,#fcfcfc_25px)] py-px shadow-[2px_2px_1px_rgba(0,0,0,0.2)]">
        {CONTEXT_MENU.map((entry, i) =>
          entry === null ? (
            <div key={i} className="my-[3px] ml-[34px] h-[2px] border-b border-[#c8c8c8]" />
          ) : (
            <button
              key={i}
              type="button"
              role="menuitem"
              className={`mx-[2px] flex h-7 w-[238px] items-center rounded-sm border pr-1 text-[17px] whitespace-nowrap ${entry.hot ? 'border-[#9cc3e4] bg-linear-to-b from-[#eef5fc] to-[#b3d6f3]' : 'border-transparent'} ${entry.off ? 'text-[#6d6d6d]' : 'text-black'}`}
            >
              <span className="flex w-[26px] pl-px">{entry.icon && <Icon name={entry.icon} size={16} />}</span>
              <span className="flex-1 text-left">{entry.text}</span>
              {entry.hint && <span className="mr-1 font-['Noto_Sans',sans-serif] text-[17px]">{entry.hint}</span>}
              {entry.sub && <svg width="7" height="14" aria-hidden="true"><path d="M0 0v14l7-7z" /></svg>}
            </button>
          ),
        )}
      </div>
      <div className="pointer-events-none absolute top-[300px] -left-[2px] flex h-[56px] w-[256px] items-center justify-end rounded-sm border-4 border-[#ff2010] pt-1 pr-4 text-2xl whitespace-nowrap text-[#ff2010]">
        新添加一列
      </div>
    </div>
  );
}

function PanelHeader({ title }: { title: string }) {
  return (
    <div className="flex h-[33px] items-center bg-linear-to-b from-[#b8cad9] to-[#d8e5f2] pr-px pl-1">
      <h2 className="flex-1 text-[17px]">{title}</h2>
      <button type="button" aria-label={`${title} 菜单`} className="flex w-[17px] justify-center"><svg width="9" height="5"><path d="M0 0h9L4.5 5z" /></svg></button>
      <button type="button" aria-label={`${title} 自动隐藏`} className="flex w-[17px] justify-center"><svg width="7" height="10" shapeRendering="crispEdges"><path d="M1.5 .5h3v5h-3z M0 6h7 M3.5 6v4 M5 0v6" fill="none" stroke="#000" /></svg></button>
      <button type="button" aria-label={`${title} 关闭`} className="flex w-[17px] justify-center"><svg width="9" height="9"><path d="M.5 .5l8 8 M8.5 .5l-8 8" stroke="#000" strokeWidth="1.5" /></svg></button>
    </div>
  );
}

const APPS: { lines: string[]; off?: boolean; art: React.ReactNode }[] = [
  {
    lines: ['添加App'],
    art: (
      <>
        <path d="M.5 .5h41v41h-41z" fill="#f6f6f6" stroke="#1b8fcf" />
        <path d="M0 0h42v6h-42z" fill="#0f86c9" />
        <path d="M3 9h15v18h-15z" fill="#c4c4c4" />
        <path d="M21.5 14.5h16v12h-16z M29.5 8.5h8v3h-8z M9.5 29.5h9v3h-9z M9.5 35.5h9v3h-9z" fill="#fff" stroke="#c4c4c4" />
        <circle cx="33.5" cy="34" r="13.5" fill="#36b53c" />
        <circle cx="33.5" cy="34" r="11" fill="#4ccb52" />
        <path d="M30.5 25h6v6h6v6h-6v6h-6v-6h-6v-6h6z" fill="#fff" />
      </>
    ),
  },
  {
    lines: ['Stats', 'Advisor'],
    art: (
      <>
        <path d="M24 22l23 24" stroke="#474f5c" strokeWidth="3" />
        <path d="M24 1l0 12 10 6-11 4-4 11-6-10-10 1 4-9-3-10 10 3z" fill="#e8c23a" stroke="#dcb22e" strokeLinejoin="round" />
        <path d="M33.5 2v8 M29.5 6h8 M5 30v7 M1.5 33.5h7 M9.5 0v2" stroke="#e8c23a" strokeWidth="1.5" />
      </>
    ),
  },
  {
    lines: ['Simple Fit'],
    off: true,
    art: (
      <>
        <path d="M0 0h48v48h-48z" fill="#aecbea" />
        <path d="M4 4v41h40" fill="none" stroke="#fff" strokeWidth="2" />
        <path d="M4 1l3 8h-6z M46 45l-7-3v6z" fill="#fff" />
        <path d="M7 42l12-1q16-3 23-32" fill="none" stroke="#f7a8d4" strokeWidth="3" />
        <g fill="#fff"><circle cx="11" cy="41" r="2" /><circle cx="20" cy="40" r="2" /><circle cx="29" cy="36" r="2" /><circle cx="34" cy="28" r="2" /><circle cx="41" cy="20" r="2" /><circle cx="43" cy="7" r="2" /></g>
      </>
    ),
  },
  {
    lines: ['Sequential', 'Fit'],
    art: (
      <>
        <g fill="none" stroke="#b9b4ee" strokeWidth="4"><path d="M1 27c8 1 8-3 11-15s5-15 7-5 3 18 9 20" /><path d="M10 35c7 1 9-5 11-14s4-16 7-7 3 20 10 21" /><path d="M17 44c7 1 9-3 11-12s4-18 7-9 3 20 12 21" /></g>
        <g fill="none" stroke="#c02b62" strokeWidth="2"><path d="M1 27c8 1 8-3 11-15s5-15 7-5 3 18 9 20" /><path d="M10 35c7 1 9-5 11-14s4-16 7-7 3 20 10 21" /><path d="M17 44c7 1 9-3 11-12s4-18 7-9 3 20 12 21" /></g>
      </>
    ),
  },
  {
    lines: ['Send Graphs', 'to Word'],
    art: (
      <>
        <path d="M13 8l18-3.5v31l-18-3.5z M31 8h14v26h-14" fill="#fff" stroke="#000080" strokeWidth="1.5" />
        <path d="M32 13h8 M32 18h8 M32 23h8 M32 28h8" stroke="#000080" strokeWidth="1.5" />
        <path d="M17 15l3 10 3-9 3 9 3-10" fill="none" stroke="#000080" strokeWidth="1.5" />
        <path d="M3 30h11v-4l8 7-8 6v-4h-11z" fill="#0000ff" />
      </>
    ),
  },
  {
    lines: ['Send Graphs', 'to PowerP...'],
    art: (
      <>
        <path d="M17 5l19-4.5v40l-19-4z" fill="#fff" stroke="#e8a898" />
        <path d="M36 7.5h11v26h-11" fill="#fff" stroke="#d9502e" />
        <path d="M24 27v-12h3q3 0 3 3t-3 3h-3" fill="none" stroke="#d9502e" strokeWidth="1.5" />
        <path d="M37 25h8v2h-8z M37 29h8v2h-8z" fill="#d9502e" />
        <circle cx="39" cy="16" r="4" fill="#d9502e" />
        <path d="M0 37h12v-4l7 6-7 6v-4h-12z" fill="#e05a32" />
      </>
    ),
  },
];

function RightPanel() {
  return (
    <aside className="flex w-[228px] shrink-0 flex-col bg-[#f0f0f0]">
      <PanelHeader title="对象管理器" />
      <div className="mt-px h-[148px] border-2 border-[#808080] bg-white pt-[2px] font-['Liberation_Sans',sans-serif] text-lg leading-6">
        <div className="flex h-7 items-center pl-[2px]">
          <svg width="18" height="18" aria-hidden="true"><path d="M.5 .5h17v17h-17z" fill="#eef0f4" stroke="#8a8a8a" /><path d="M3 9h12" stroke="#3556a8" strokeWidth="2" /></svg>
          <svg width="24" height="18" viewBox="0 0 24 18" className="ml-[2px]" aria-hidden="true"><path d="M1 16v-14h7l2 2h9v12z" fill="#f6d268" stroke="#b98a22" /><path d="M2 17l5-9h16l-4 9z" fill="#fbc94a" stroke="#b98a22" /></svg>
          <span className="ml-1">Book1</span>
        </div>
        <div className="flex h-[29px] items-center border border-dotted border-[#f0a050] bg-[#0078d7] text-white">
          <span className="mb-3 ml-[11px] h-4 w-[13px] border-b border-l border-dotted border-[#c8c8c8]" />
          <span className="ml-[21px]">Sheet1</span>
        </div>
      </div>
      <div className="h-1 bg-[#f3f5ff]" />
      <PanelHeader title="Apps" />
      <div className="flex min-h-0 flex-1">
        <div className="flex w-[33px] shrink-0 flex-col items-center pt-[6px]">
          {['M0 0h7v1h-7z M3.5 2l3.5 4h-7z', 'M3.5 2l3.5 4h-7z', 'M3.5 6l3.5-4h-7z', 'M3.5 5l3.5-4h-7z M0 6h7v1h-7z'].map((d) => (
            <button key={d} type="button" aria-label="移动标签" className="flex h-4 w-4 items-center justify-center"><svg width="7" height="7"><path d={d} /></svg></button>
          ))}
          <button type="button" className="relative flex h-[60px] w-full items-center justify-center">
            <svg width="33" height="63" className="absolute top-0 left-0 overflow-visible" aria-hidden="true"><path d="M34 1L5 15v33l29 14z" fill="#fff" /><path d="M34 1L5 15v33l29 14" fill="none" stroke="#777" /></svg>
            <span className="relative text-lg leading-none font-bold [writing-mode:vertical-rl] [text-orientation:sideways]">所有</span>
          </button>
          <button type="button" className="relative flex h-[54px] w-full items-center justify-center">
            <svg width="33" height="68" className="absolute top-0 left-0 overflow-visible" aria-hidden="true"><path d="M20 -3L5 6v48l29 16" fill="none" stroke="#777" /></svg>
            <span className="relative text-[17px] leading-none [writing-mode:vertical-rl] [text-orientation:sideways]">连接器</span>
          </button>
        </div>
        <div className="flex min-w-0 flex-1 border border-[#8a8a8a] bg-white">
          <ul className="min-h-0 flex-1 overflow-hidden pt-[5px] pr-[49px] text-center font-['Noto_Sans','Noto_Sans_CJK_SC',sans-serif] text-lg leading-6 whitespace-nowrap">
            {APPS.map((app) => (
              <li key={app.lines.join()} className={`flex h-[113px] flex-col items-center ${app.off ? 'text-[#6d6d6d]' : ''}`}>
                <svg width="48" height="48" viewBox="0 0 48 48" className="mb-[2px] shrink-0" aria-hidden="true">{app.art}</svg>
                {app.lines.map((line) => <span key={line} className="-mx-2">{line}</span>)}
              </li>
            ))}
            <li className="flex justify-center">
              <svg width="48" height="48" viewBox="0 0 48 48" aria-hidden="true"><path d="M2 3h4 M2 8h4 M2 13h4" stroke="#a00000" strokeWidth="2" /><path d="M9 3h4 M9 8h4 M9 13h4" stroke="#00a000" strokeWidth="2" /><path d="M16 3h4 M16 8h4 M16 13h4" stroke="#0000a0" strokeWidth="2" /><ellipse cx="31" cy="16" rx="5" ry="3" fill="#a0a000" /></svg>
            </li>
          </ul>
          <div className="mr-[3px] flex w-6 shrink-0 flex-col items-center bg-[#f0f0f0]">
            <button type="button" aria-label="向上" className="flex h-[28px] w-full items-center justify-center"><svg width="12" height="8"><path d="M1 7l5-5 5 5" fill="none" stroke="#555" strokeWidth="2" /></svg></button>
            <div className="w-full flex-[484] bg-[#cdcdcd]" />
            <div className="flex-[158]" />
            <button type="button" aria-label="向下" className="flex h-[28px] w-full items-center justify-center"><svg width="12" height="8"><path d="M1 1l5 5 5-5" fill="none" stroke="#555" strokeWidth="2" /></svg></button>
          </div>
        </div>
      </div>
    </aside>
  );
}

function LeftArea() {
  const tab = 'flex w-[27px] justify-start border-r border-b border-[#d0d0d8] bg-[#f0f0f0] pt-px pl-[3px]';
  const label = "font-['Liberation_Mono','Noto_Sans_CJK_SC',monospace] text-lg leading-none font-light text-[#777] [writing-mode:vertical-rl] [text-orientation:sideways]";
  return (
    <div className="relative flex w-[65px] shrink-0">
      <div className="flex w-[29px] flex-col gap-[14px] pt-[3px]">
        <button type="button" className={`${tab} h-[158px] items-start`}><span className={label}>项目管理器 (1)</span></button>
        <button type="button" className={`${tab} h-[103px] items-start`}><span className={label}>消息日志</span></button>
        <button type="button" className={`${tab} h-[103px] items-start`}><span className={label}>提示日志</span></button>
      </div>
      <div>
        <SideBar wide>
          <Tools vertical items="*pointer zoom-in zoom-out reader data-reader+ squeeze mask-tool+ draw-tool+ dots text insert-object arrow-tool+ line-tool+ rect-tool+ hand formula+ graph-page+ pan-axis rotate-cube" />
        </SideBar>
        <SideBar>
          <Tools vertical items="lines4 rings legend significance scale timestamp stamp-folder table" />
        </SideBar>
      </div>
      <div className="absolute bottom-[52px] left-[2px] flex h-[60px] w-[9px] flex-col overflow-hidden rounded-full border border-[#e8e8f0]">
        <div className="h-4 bg-[#9c9ca8]" />
        <div className="flex-1 bg-linear-to-b from-[#22c468] via-[#34d468] to-[#7ff080]" />
      </div>
    </div>
  );
}

export default function App() {
  return (
    <div className="relative flex h-screen flex-col overflow-hidden bg-linear-to-r from-[#ebedfc] to-[#f3f6ff] font-['Noto_Sans','Noto_Sans_CJK_SC',sans-serif] text-black">
      <TopArea />
      <div className="flex min-h-0 flex-1">
        <LeftArea />
        <div className="flex min-w-0 flex-1 flex-col">
          <div className="flex min-h-0 flex-1">
            <main className="relative min-w-0 flex-1 border-t border-l-2 border-[#6d6d6d] bg-[#ababab]">
              <BookWindow />
              <ContextMenu />
            </main>
            <div className="w-8 shrink-0 pl-px">
              <SideBar>
                <Tools vertical items="layer-steps axes3 axes-down axes-up swap-xy run-axes | layout-1-2 layout-2-2 layout-dark layout-stack | frame-l frame-top frame-right frame-full frame-in frame-in2" />
              </SideBar>
              <SideBar>
                <Tools vertical items="al-left al-right | al-top al-bottom | al-vert al-horz | same-w same-h | dist-h dist-v front back | box box-dots | group ungroup" />
              </SideBar>
            </div>
          </div>
          <div className="flex h-9 pt-[2px]">
            <Bar><Tools items="plot-line+ plot-scatter+ plot-line-symbol+ plot-column+ plot-multi+ plot-box+ plot-area+ plot-polar+ plot-stock+ plot-template" /></Bar>
            <Bar><Tools items="plot-3d-bars+ | plot-surface+ plot-3d-scatter+ plot-contour+ plot-waterfall+ plot-image" /></Bar>
            <Bar><Tools items="mask-face mask-face-x | mask-color mask-range mask-range2 | mask-toggle" /></Bar>
            <Bar>
              <Tools items="rot-left rot-right tilt-left tilt-right persp-up persp-down persp resize expand axes-cube cube" />
              <Combo label="角度" value="10" box="mx-[2px] h-7 w-[89px]" />
            </Bar>
          </div>
        </div>
        <RightPanel />
      </div>
      <footer className="relative flex h-[29px] shrink-0 items-center border-t border-[#dadade] bg-[#f0f0f0] font-['Open_Sans','Noto_Sans_CJK_SC',sans-serif] text-[17px] whitespace-nowrap">
        <svg width="48" height="48" viewBox="0 0 48 48" className="absolute bottom-0 left-0" aria-hidden="true">
          <defs><radialGradient id="orb" cx="0.5" cy="0.9" r="0.9"><stop offset="0" stopColor="#f7c0a4" /><stop offset="0.6" stopColor="#e2705a" /><stop offset="1" stopColor="#d9402e" /></radialGradient></defs>
          <circle cx="24" cy="25" r="22.5" fill="url(#orb)" stroke="#d83a2a" />
          <path d="M17 4v36 M27 3v38 M37 8v32 M5 14h38 M3 24h42 M5 34h38" stroke="#f8d0c0" strokeOpacity="0.6" />
          <path d="M16 35l5-4 6-15 5 5 5-10" fill="none" stroke="#2f6aa8" strokeWidth="1.5" />
          <g fill="#2f6aa8"><circle cx="16" cy="35" r="2" /><circle cx="21" cy="31" r="2" /><circle cx="27" cy="16" r="2" /><circle cx="32" cy="21" r="2" /><circle cx="37" cy="11" r="2" /></g>
        </svg>
        <span className="flex-1 pl-[47px]">在当前工作表末尾添加新列</span>
        <span className="border-r border-[#d0d0d0] pr-[2px]">平均值=0 求和=0 计数=0</span>
        <span className="ml-[10px] border-x border-[#d0d0d0] px-1">AU : 开</span>
        <span className="ml-2 border-l border-[#d0d0d0] pl-2">1: [Book1]Sheet1! 弧度</span>
        <span className="pointer-events-none absolute right-3 bottom-2 text-[17px] leading-none text-[#808080]/70">CSDN @GNSS菜鸟</span>
      </footer>
    </div>
  );
}
